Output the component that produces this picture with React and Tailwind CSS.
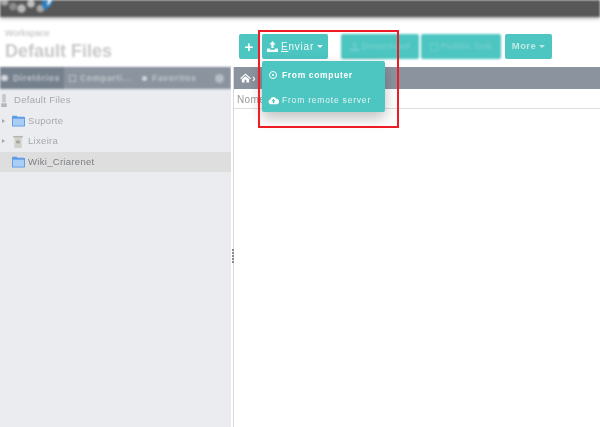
import React from "react";

const Cloud = ({ className }) => (
  <svg viewBox="0 0 16 12" className={className} fill="currentColor"><path d="M4 11.5a3.5 3.5 0 0 1-.6-6.9A4.5 4.5 0 0 1 12 3.6a3.5 3.5 0 0 1 .3 7.9H4z" /><path d="M8 3.5 5.2 7H7v3h2V7h1.8z" fill="#4dc5c1" /></svg>
);
const Upload = ({ className }) => (
  <svg viewBox="0 0 14 14" className={className} fill="currentColor"><path d="M7 0 3 4.5h2.5V9h3V4.5H11z" /><path d="M0 9.5h4V11h6V9.5h4V14H0z" /></svg>
);
const Folder = () => (
  <svg viewBox="0 0 14 12" className="h-[12px] w-[13px] shrink-0"><path d="M0 1.5C0 .7.5.3 1 .3h4l1 1.2h7c.6 0 1 .4 1 1V11c0 .6-.4 1-1 1H1c-.6 0-1-.4-1-1z" fill="#5b9be8" /><path d="M1 3.5h12V11H1z" fill="#a9cdf5" /></svg>
);
const Trash = () => (
  <svg viewBox="0 0 10 14" className="h-[13px] w-[10px] shrink-0"><path d="M0 1h10v2H0z" fill="#b5b5b0" /><path d="M1 3h8v11H1z" fill="#d2d2cc" /><path d="M3 6h4v3H3z" fill="#a5a59e" /></svg>
);
const Server = () => (
  <svg viewBox="0 0 6 14" className="h-[13px] w-[6px] shrink-0"><path d="M1 0h4v9H1z" fill="#c8c8c8" /><path d="M0 10h6v4H0z" fill="#b5b5b5" /></svg>
);

const Row = ({ selected, icon, label, arrow, left, gap, text }) => (
  <div className={`relative flex h-[20.5px] items-center ${selected ? "bg-[#dedede]" : ""}`}>
    {arrow && <span className="absolute left-[2px] top-[8px] h-0 w-0 border-y-[2.5px] border-l-[3px] border-y-transparent border-l-[#a5a5a5] blur-[0.6px]" />}
    <div className={`flex items-center ${left} ${gap} blur-[0.7px]`}>
      {icon}
      <span className={`text-[9.5px] tracking-[0.3px] ${text}`}>{label}</span>
    </div>
  </div>
);

const Btn = ({ w, children, color = "text-white", blur = "blur-[0.5px]" }) => (
  <div className={`flex h-[25px] ${w} items-center justify-center gap-[3px] rounded-[2px] bg-[#4dc5c1] text-[9.5px] font-bold tracking-[0.4px] ${color} ${blur}`}>
    {children}
  </div>
);

const Caret = () => <span className="h-0 w-0 border-x-[3px] border-t-[3px] border-x-transparent border-t-current" />;

export default function App() {
  return (
    <div className="relative flex h-[427px] w-[600px] flex-col overflow-hidden bg-white font-['Liberation_Sans',Arial,sans-serif]">
      {/* top bar */}
      <div className="relative h-[17px] shrink-0 bg-[#575757] shadow-[0_2px_3px_rgba(0,0,0,0.25)] blur-[1px]">
        <svg viewBox="0 0 60 18" className="absolute left-0 top-0 h-[17px] w-[60px]">
          <circle cx="3" cy="2" r="4" fill="#a8a8a8" />
          <circle cx="12" cy="7" r="4" fill="#8c8c8c" />
          <circle cx="21" cy="9" r="4.5" fill="#b8b8b8" />
          <circle cx="31" cy="4" r="4" fill="#c0c0c0" />
          <circle cx="41" cy="9" r="4" fill="#a8a8a8" />
          <path d="M43 0h12l-3 6-6 5-3-4z" fill="#2f7fbf" />
          <path d="M49 0h4l-2 4-3 2z" fill="#e8f0f5" />
        </svg>
      </div>

      {/* title + toolbar */}
      <div className="flex h-[50px] shrink-0">
        <div className="w-[239px] pl-[5px] pt-[11px] blur-[1px]">
          <div className="text-[9px] leading-[10px] text-[#b8b8b8]">Workspace</div>
          <div className="mt-[2px] text-[18px] font-bold leading-[22px] text-[#c8c8c8]">Default Files</div>
        </div>
        <div className="flex items-start pt-[17px]">
          <Btn w="w-[20px]"><span className="text-[15px] leading-none">+</span></Btn>
          <div className="ml-[3px] flex h-[25px] w-[66px] items-center justify-center gap-[3px] rounded-[2px] bg-[#4dc5c1] text-[10px] tracking-[0.8px] text-[#f2fbfb] blur-[0.2px]">
            <Upload className="h-[11px] w-[11px]" />
            <span><span className="underline">E</span>nviar</span>
            <Caret />
          </div>
          <div className="ml-[13px] flex gap-[2px]">
            <Btn w="w-[78px]" color="text-[#70cfcc]" blur="blur-[1px]"><Upload className="h-[9px] w-[9px]" />Download</Btn>
            <Btn w="w-[80px]" color="text-[#70cfcc]" blur="blur-[1px]"><span className="h-[8px] w-[8px] border border-current" />Public link</Btn>
            <div className="ml-[2px]">
              <Btn w="w-[47px]" color="text-[#bfe9e7]"><span>More</span><Caret /></Btn>
            </div>
          </div>
        </div>
      </div>

      {/* main */}
      <div className="flex min-h-0 flex-1">
        <aside className="flex h-full w-[231px] shrink-0 flex-col bg-[#ebecf0]">
          <div className="flex h-[22px] shrink-0 items-stretch bg-[#8a939e] text-[8.5px] font-bold tracking-[0.7px] text-[#c2c8ce] blur-[0.9px]">
            <div className="flex w-[64px] items-center gap-[5px] bg-[#75808d] pl-[1px]"><span className="h-[6px] w-[7px] rounded-full bg-[#d5d8dc]" />Diretórios</div>
            <div className="flex w-[72px] items-center gap-[4px] pl-[5px]"><span className="h-[7px] w-[7px] border border-[#bcc2c9]" />Comparti...</div>
            <div className="flex flex-1 items-center gap-[5px] pl-[6px]"><span className="h-[5px] w-[5px] rounded-full bg-[#d5d8dc]" />Favoritos</div>
            <div className="flex w-[16px] items-center"><span className="h-[9px] w-[9px] rounded-full bg-[#b6bcc4]" /></div>
          </div>
          <div className="pt-[1px]">
            <Row icon={<Server />} label="Default Files" left="pl-[1px]" gap="gap-[7px]" text="text-[#a5a8ac]" />
            <Row arrow icon={<Folder />} label="Suporte" left="pl-[12px]" gap="gap-[3px]" text="text-[#a5a8ac]" />
            <Row arrow icon={<Trash />} label="Lixeira" left="pl-[13px]" gap="gap-[5px]" text="text-[#a5a8ac]" />
            <Row selected icon={<Folder />} label="Wiki_Criarenet" left="pl-[12px]" gap="gap-[3px]" text="text-[#7b7e82]" />
          </div>
        </aside>

        {/* splitter */}
        <div className="relative h-full w-[3px] shrink-0 border-r border-[#d9d9d9] bg-white">
          <div className="absolute left-[1px] top-[182px] flex flex-col gap-[1px] blur-[0.3px]">
            {[0, 1, 2, 3, 4].map((i) => <span key={i} className="h-[2px] w-[2px] bg-[#888]" />)}
          </div>
        </div>

        <div className="min-w-0 flex-1">
          <div className="flex h-[22px] items-center bg-[#8a939e] pl-[6px] text-[11px] font-bold text-white blur-[0.5px]">
            <svg viewBox="0 0 12 10" className="h-[10px] w-[11px]" fill="currentColor"><path d="M6 0 0 5.2l1 .8L6 1.8 11 6l1-.8zM2 6.2V10h3V7h2v3h3V6.2L6 3z" /></svg>
            <span className="ml-[1px] leading-none">›</span>
          </div>
          <div className="flex h-[20px] items-center border-b border-[#dedede] bg-white pl-[3px] pt-[1px] text-[10px] tracking-[0.4px] text-[#9a9a9a] blur-[0.5px]">Nome</div>
        </div>
      </div>

      {/* dropdown menu */}
      <div className="absolute left-[262px] top-[61px] flex h-[51px] w-[123px] flex-col rounded-[2px] bg-[#4dc5c1] text-[8.5px] tracking-[0.8px] text-white shadow-[0_6px_14px_rgba(0,0,0,0.25)]">
        <div className="flex h-[28px] items-center gap-[5px] pl-[7px] font-bold tracking-[0.65px] blur-[0.2px]">
          <span className="flex h-[8px] w-[8px] items-center justify-center rounded-full border border-white"><span className="h-[2px] w-[2px] rounded-full bg-white" /></span>
          From computer
        </div>
        <div className="flex h-[23px] items-center gap-[3px] pl-[6px] text-[#e4f6f5] blur-[0.2px]">
          <Cloud className="h-[9px] w-[11px] text-white" />
          From remote server
        </div>
      </div>

      {/* red annotation */}
      <div className="absolute left-[258px] top-[30px] h-[98px] w-[141px] border-2 border-[#ee1c25]" />
    </div>
  );
}
